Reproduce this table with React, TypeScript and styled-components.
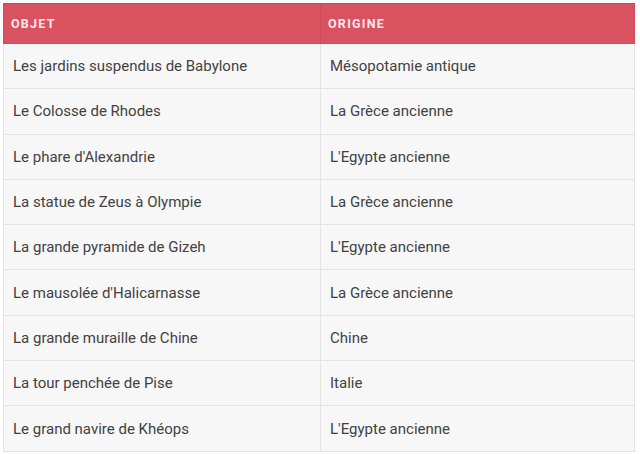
import { FC } from "react";
import styled, { createGlobalStyle } from "styled-components";

const GlobalStyle = createGlobalStyle`
  body {
    margin: 0;
    background: #ffffff;
    font-family: Roboto, "Liberation Sans", sans-serif;
  }
`;

const Page = styled.div`
  padding: 3px 5px 0 3px;
`;

const Table = styled.table`
  width: 632px;
  border-collapse: collapse;
  table-layout: fixed;
`;

const HeadCell = styled.th`
  height: 39px;
  padding: 0 0 0 7px;

  text-align: left;
  font-size: 12.5px;
  font-weight: 700;
  letter-spacing: 0.1em;
  text-transform: uppercase;

  color: #fbeaec;
  background-color: #d95260;
  border: 1px solid #d14957;
`;

const Cell = styled.td`
  height: 44.3px;
  padding: 0 0 0 9px;

  font-size: 15px;
  color: #424242;

  background-color: #f7f7f7;
  border: 1px solid #e3e3e3;
`;

interface IRow {
  objet: string;
  origine: string;
}

const rows: IRow[] = [
  { objet: "Les jardins suspendus de Babylone", origine: "Mésopotamie antique" },
  { objet: "Le Colosse de Rhodes", origine: "La Grèce ancienne" },
  { objet: "Le phare d'Alexandrie", origine: "L'Egypte ancienne" },
  { objet: "La statue de Zeus à Olympie", origine: "La Grèce ancienne" },
  { objet: "La grande pyramide de Gizeh", origine: "L'Egypte ancienne" },
  { objet: "Le mausolée d'Halicarnasse", origine: "La Grèce ancienne" },
  { objet: "La grande muraille de Chine", origine: "Chine" },
  { objet: "La tour penchée de Pise", origine: "Italie" },
  { objet: "Le grand navire de Khéops", origine: "L'Egypte ancienne" },
];

const App: FC = () => {
  return (
    <Page>
      <GlobalStyle />
      <Table>
        <colgroup>
          <col style={{ width: 317 }} />
          <col />
        </colgroup>
        <thead>
          <tr>
            <HeadCell>Objet</HeadCell>
            <HeadCell>Origine</HeadCell>
          </tr>
        </thead>
        <tbody>
          {rows.map((r) => (
            <tr key={r.objet}>
              <Cell>{r.objet}</Cell>
              <Cell>{r.origine}</Cell>
            </tr>
          ))}
        </tbody>
      </Table>
    </Page>
  );
};

export default App;
